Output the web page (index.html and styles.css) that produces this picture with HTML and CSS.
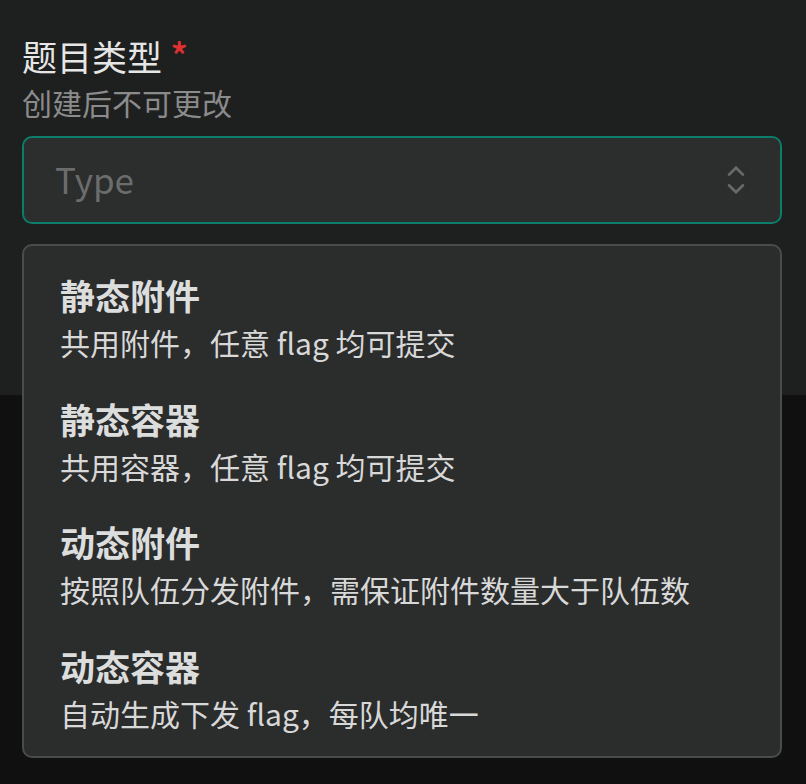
FILE: index.html
```html
<!DOCTYPE html>
<html lang="zh-CN">
<head>
<meta charset="utf-8">
<title>题目类型</title>
<link rel="stylesheet" href="styles.css">
</head>
<body>
<main class="field">
  <label class="field-label">题目类型<span class="required"> *</span></label>
  <p class="field-desc">创建后不可更改</p>
  <div class="select">
    <span class="placeholder">Type</span>
    <svg class="chevrons" viewBox="0 0 15 15" width="46" height="46" aria-hidden="true">
      <path fill="currentColor" d="M4.93179 5.43179C4.75605 5.60753 4.75605 5.89245 4.93179 6.06819C5.10753 6.24392 5.39245 6.24392 5.56819 6.06819L7.49999 4.13638L9.43179 6.06819C9.60753 6.24392 9.89245 6.24392 10.0682 6.06819C10.2439 5.89245 10.2439 5.60753 10.0682 5.43179L7.81819 3.18179C7.73379 3.0974 7.61933 3.04999 7.49999 3.04999C7.38064 3.04999 7.26618 3.0974 7.18179 3.18179L4.93179 5.43179ZM10.0682 9.56819C10.2439 9.39245 10.2439 9.10753 10.0682 8.93179C9.89245 8.75606 9.60753 8.75606 9.43179 8.93179L7.49999 10.8636L5.56819 8.93179C5.39245 8.75606 5.10753 8.75606 4.93179 8.93179C4.75605 9.10753 4.75605 9.39245 4.93179 9.56819L7.18179 11.8182C7.26618 11.9026 7.38064 11.95 7.49999 11.95C7.61933 11.95 7.73379 11.9026 7.81819 11.8182L10.0682 9.56819Z"/>
    </svg>
  </div>
  <ul class="dropdown">
    <li class="option">
      <div class="opt-title">静态附件</div>
      <div class="opt-desc">共用附件，任意 flag 均可提交</div>
    </li>
    <li class="option">
      <div class="opt-title">静态容器</div>
      <div class="opt-desc">共用容器，任意 flag 均可提交</div>
    </li>
    <li class="option">
      <div class="opt-title">动态附件</div>
      <div class="opt-desc">按照队伍分发附件，需保证附件数量大于队伍数</div>
    </li>
    <li class="option">
      <div class="opt-title">动态容器</div>
      <div class="opt-desc">自动生成下发 flag，每队均唯一</div>
    </li>
  </ul>
</main>
<div class="watermarks" aria-hidden="true">
  <span class="wm wm-a1">01985697-1bd9-7bcb-8c07-d6fea499f039</span>
  <span class="wm wm-a2">01985697-1bd9-7bcb-8c07-d6fea499f039</span>
  <span class="wm wm-a3">01985697-1bd9-7bcb-8c07-d6fea499f039</span>
  <span class="wm wm-a4">01985697-1bd9-7bcb-8c07-d6fea499f039</span>
  <span class="wm wm-b1">01985697-1bd9-7bcb-8c07-d6fea499f039</span>
  <span class="wm wm-b2">01985697-1bd9-7bcb-8c07-d6fea499f039</span>
  <span class="wm wm-b3">01985697-1bd9-7bcb-8c07-d6fea499f039</span>
</div>
</body>
</html>
```
FILE: styles.css
```css
html, body {
  margin: 0;
  padding: 0;
}

body {
  width: 806px;
  height: 784px;
  overflow: hidden;
  position: relative;
  background: linear-gradient(to bottom, #1e1f1f 0, #1e1f1f 395px, #101010 395px, #101010 100%);
  font-family: "Noto Sans CJK SC", "Noto Sans", sans-serif;
  color: #e2e2e2;
}

.field {
  display: flex;
  flex-direction: column;
  padding: 29px 24px 0 22px;
}

.field-label {
  display: block;
  height: 54px;
  font-size: 35px;
  line-height: 54px;
  font-weight: 400;
  color: #e6e6e6;
}

.required {
  color: #e03131;
  font-size: 37px;
  line-height: 1;
  font-weight: 500;
}

.field-desc {
  margin: 1px 0 0;
  font-size: 30px;
  line-height: 36px;
  color: #8b8b8b;
}

.select {
  box-sizing: border-box;
  margin-top: 16px;
  height: 88px;
  display: flex;
  align-items: center;
  padding: 0 21px 4px 31px;
  background: #2c2d2d;
  border: 2px solid #0a7d6b;
  border-radius: 10px;
}

.placeholder {
  font-size: 35px;
  line-height: 1;
  color: #6b6c6c;
}

.chevrons {
  margin-left: auto;
  margin-top: 4px;
  color: #686969;
}

.dropdown {
  list-style: none;
  box-sizing: border-box;
  margin: 20px 0 0;
  padding: 8px;
  height: 514px;
  background: #2b2c2c;
  border: 2px solid #4a4b4b;
  border-radius: 10px;
}

.option {
  padding: 14px 28px;
  height: 123.5px;
  box-sizing: border-box;
}

.opt-title {
  font-size: 35px;
  line-height: 54px;
  font-weight: 700;
  color: #dcdddd;
}

.opt-desc {
  font-size: 30px;
  line-height: 41px;
  color: #d8d8d8;
}

.watermarks {
  position: absolute;
  inset: 0;
  overflow: hidden;
  pointer-events: none;
}

.wm {
  position: absolute;
  white-space: nowrap;
  font-family: "Liberation Sans", "DejaVu Sans", sans-serif;
  font-size: 34px;
  line-height: 1;
  color: rgba(255, 255, 255, 0.018);
  transform-origin: 0 100%;
  transform: rotate(-13deg);
}

.wm-a1 { left: 617px; top: 26px; }
.wm-a2 { left: 617px; top: 312px; }
.wm-a3 { left: 617px; top: 597px; }
.wm-a4 { left: 617px; top: 882px; }
.wm-b1 { left: -240px; top: 27px; }
.wm-b2 { left: -240px; top: 312px; }
.wm-b3 { left: -240px; top: 597px; }
```
